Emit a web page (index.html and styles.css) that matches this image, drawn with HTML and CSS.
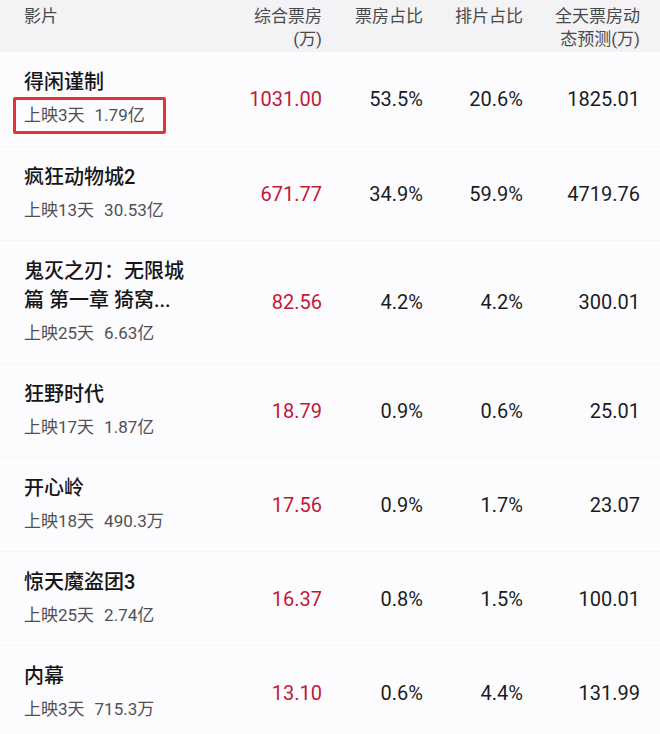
FILE: index.html
```html
<!DOCTYPE html>
<html lang="zh-CN">
<head>
<meta charset="utf-8">
<title>票房</title>
<link rel="stylesheet" href="styles.css">
</head>
<body>
<div class="table">
  <div class="row head">
    <div class="name">影片</div>
    <div class="num">综合票房<br>(万)</div>
    <div class="num">票房占比</div>
    <div class="num">排片占比</div>
    <div class="num">全天票房动<br>态预测(万)</div>
  </div>

  <div class="row">
    <div class="name"><div class="title">得闲谨制</div><div class="sub boxed">上映3天<span class="amt">1.79亿</span></div></div>
    <div class="num red">1031.00</div><div class="num">53.5%</div><div class="num">20.6%</div><div class="num">1825.01</div>
  </div>

  <div class="row">
    <div class="name"><div class="title">疯狂动物城2</div><div class="sub">上映13天<span class="amt">30.53亿</span></div></div>
    <div class="num red">671.77</div><div class="num">34.9%</div><div class="num">59.9%</div><div class="num">4719.76</div>
  </div>

  <div class="row">
    <div class="name"><div class="title">鬼灭之刃：无限城<br>篇 第一章 猗窝...</div><div class="sub">上映25天<span class="amt">6.63亿</span></div></div>
    <div class="num red">82.56</div><div class="num">4.2%</div><div class="num">4.2%</div><div class="num">300.01</div>
  </div>

  <div class="row">
    <div class="name"><div class="title">狂野时代</div><div class="sub">上映17天<span class="amt">1.87亿</span></div></div>
    <div class="num red">18.79</div><div class="num">0.9%</div><div class="num">0.6%</div><div class="num">25.01</div>
  </div>

  <div class="row">
    <div class="name"><div class="title">开心岭</div><div class="sub">上映18天<span class="amt">490.3万</span></div></div>
    <div class="num red">17.56</div><div class="num">0.9%</div><div class="num">1.7%</div><div class="num">23.07</div>
  </div>

  <div class="row">
    <div class="name"><div class="title">惊天魔盗团3</div><div class="sub">上映25天<span class="amt">2.74亿</span></div></div>
    <div class="num red">16.37</div><div class="num">0.8%</div><div class="num">1.5%</div><div class="num">100.01</div>
  </div>

  <div class="row">
    <div class="name"><div class="title">内幕</div><div class="sub">上映3天<span class="amt">715.3万</span></div></div>
    <div class="num red">13.10</div><div class="num">0.6%</div><div class="num">4.4%</div><div class="num">131.99</div>
  </div>
</div>
</body>
</html>
```

FILE: styles.css
```css
* { box-sizing: border-box; }
html, body {
  margin: 0;
  padding: 0;
  background: #fcfcfe;
}
body {
  font-family: Roboto, "Noto Sans CJK SC", sans-serif;
  color: #1c1c1e;
  overflow: hidden;
}
.table {
  width: 660px;
}
.row {
  display: grid;
  grid-template-columns: 200px 122px 101px 100px 117px;
  align-items: center;
  padding-right: 20px;
  border-bottom: 1px solid #f5f5f8;
  padding-top: 16px;
  padding-bottom: 16px;
}
.row .name {
  padding-left: 24px;
}
.head {
  background: #f3f3f5;
  height: 52px;
  padding-top: 5px;
  padding-bottom: 0;
  align-items: start;
  border-bottom: none;
  font-size: 17px;
  line-height: 23px;
  color: #4a4a4c;
}
.head .num {
  font-size: 17px;
  color: #4a4a4c;
}
.num {
  text-align: right;
  font-size: 20px;
  color: #1c1c1e;
}
.num.red {
  color: #c2183a;
}
.title {
  font-size: 20px;
  line-height: 29px;
  color: #161618;
  font-weight: 500;
}
.sub {
  margin-top: 4px;
  font-size: 17px;
  line-height: 28px;
  color: #505053;
  white-space: nowrap;
}
.amt {
  margin-left: 10px;
}
.boxed {
  display: inline-block;
  border: 3px solid #e2353a;
  border-radius: 2px;
  margin-left: -11px;
  margin-top: 0;
  margin-bottom: -4px;
  padding: 1px 18px 2px 8px;
  line-height: 28px;
}
```
